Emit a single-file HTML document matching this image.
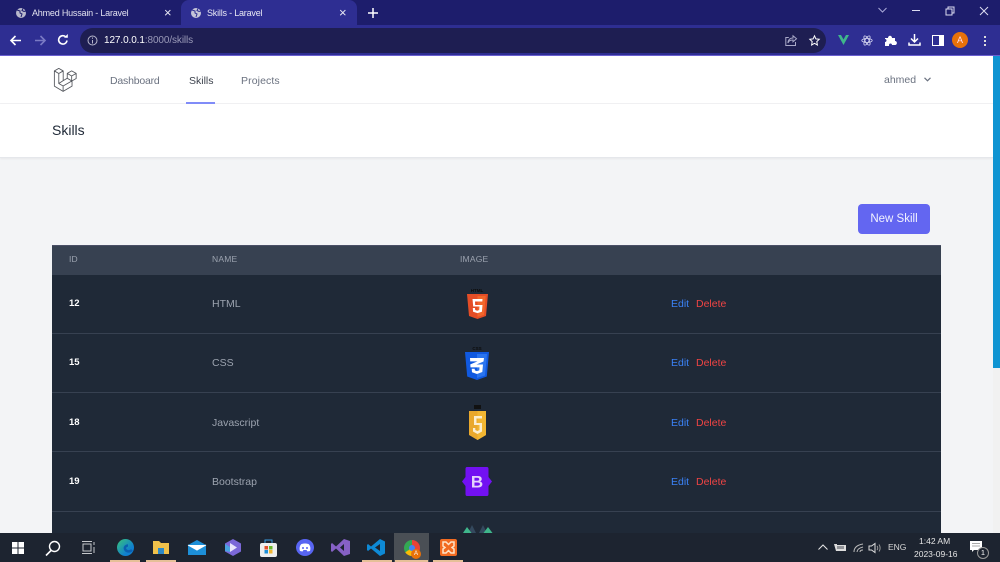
<!DOCTYPE html>
<html><head><meta charset="utf-8">
<style>
html,body{margin:0;padding:0;width:1000px;height:562px;overflow:hidden;background:#f3f4f6;font-family:"Liberation Sans",sans-serif}
#w{position:absolute;left:0;top:0;width:1000px;height:562px;overflow:hidden;filter:blur(.35px)}
.a{position:absolute;white-space:nowrap}
svg{position:absolute;overflow:visible}
.row{position:absolute;left:52px;width:889px;height:59px;background:#1f2937;border-top:1px solid #374151;box-sizing:border-box}
.t{position:absolute;font-size:10.5px;line-height:14px;white-space:nowrap}
</style></head><body><div id="w">
<!-- chrome -->
<div class="a" style="left:0;top:0;width:1000px;height:26px;background:#1d1d6c"></div>
<div class="a" style="left:181px;top:0;width:176px;height:26px;background:#2e2e92;border-radius:8px 8px 0 0"></div>
<div class="a" style="left:0;top:25px;width:1000px;height:31px;background:#2e2e92"></div>
<div class="a" style="left:0;top:55px;width:1000px;height:1px;background:#6a5fd0"></div>
<div class="a" style="left:80px;top:28px;width:746px;height:25px;background:#1e1e52;border-radius:13px"></div>
<svg style="left:15px;top:7px" width="12" height="12" viewBox="0 0 12 12"><circle cx="6" cy="6" r="5" fill="#b8b8cc"/><path d="M2 3l3 1 0 2 2 1-1 3M8 1.500l-1 2 2 1 2-.5" stroke="#1d1d6c" fill="none"/></svg>
<div class="a" style="left:32px;top:6px;font-size:9px;letter-spacing:-.2px;line-height:14px;color:#e2e2f0">Ahmed Hussain - Laravel</div>
<div class="a" style="left:164px;top:5px;font-size:13px;line-height:15px;color:#e8e8f4">×</div>
<svg style="left:190px;top:7px" width="12" height="12" viewBox="0 0 12 12"><circle cx="6" cy="6" r="5" fill="#c4c4d8"/><path d="M2 3l3 1 0 2 2 1-1 3M8 1.500l-1 2 2 1 2-.5" stroke="#2e2e92" fill="none"/></svg>
<div class="a" style="left:207px;top:6px;font-size:9px;letter-spacing:-.2px;line-height:14px;color:#e8e8f4">Skills - Laravel</div>
<div class="a" style="left:339px;top:5px;font-size:13px;line-height:15px;color:#e8e8f4">×</div>
<svg style="left:368px;top:8px" width="10" height="10"><path d="M5 0v10M0 5h10" stroke="#fff" stroke-width="1.500"/></svg>
<svg style="left:878px;top:7px" width="9" height="6"><path d="M.5 1l4 4 4-4" stroke="#a9a9d8" fill="none"/></svg>
<svg style="left:912px;top:10px" width="10" height="2"><path d="M0 .5h8" stroke="#dcdcf0"/></svg>
<svg style="left:945px;top:6px" width="10" height="10"><path d="M1 3h6v6h-6zM3 3v-2h6v6h-2" stroke="#dcdcf0" fill="none"/></svg>
<svg style="left:979px;top:6px" width="10" height="10"><path d="M1 1l8 8M9 1l-8 8" stroke="#dcdcf0"/></svg>
<svg style="left:10px;top:35px" width="12" height="11"><path d="M11 5.500H1.500M5.500 1L1 5.500 5.500 10" stroke="#fff" stroke-width="1.600" fill="none"/></svg>
<svg style="left:34px;top:35px" width="12" height="11"><path d="M1 5.500h9.500M6.500 1L11 5.500 6.500 10" stroke="#7a7ac4" stroke-width="1.600" fill="none"/></svg>
<svg style="left:57px;top:34px" width="12" height="12"><path d="M10 6.500A4.200 4.200 0 1 1 8.900 3" stroke="#fff" stroke-width="1.600" fill="none"/><path d="M7 3.800h3.800V0z" fill="#fff"/></svg>
<svg style="left:87px;top:35px" width="11" height="11"><circle cx="5.500" cy="5.500" r="4.500" stroke="#b8b8cc" fill="none"/><path d="M5.500 5v3.500M5.500 2.500v1.200" stroke="#b8b8cc"/></svg>
<div class="a" style="left:104px;top:33px;font-size:10px;letter-spacing:-.1px;line-height:15px;color:#fff">127.0.0.1<span style="color:#9a9ab8">:8000/skills</span></div>
<svg style="left:785px;top:35px" width="12" height="11"><path d="M8 .8l3.500 3-3.500 3V5C5 5 3.500 6 3 8c0-3 2-5 5-5zM10.500 7v3.500H.8V2.500h3" stroke="#a9a9c8" fill="none"/></svg>
<svg style="left:809px;top:35px" width="11" height="11" viewBox="0 0 11 11"><path d="M5.500.8l1.400 3.100 3.300.4-2.400 2.300.6 3.400-2.900-1.700L2.600 10l.6-3.400L.8 4.300l3.300-.4z" stroke="#fff" fill="none"/></svg>
<svg style="left:838px;top:35px" width="11" height="10"><path d="M0 0h3l2.500 4.500L8 0h3L5.500 10z" fill="#3fb68b"/></svg>
<svg style="left:861px;top:35px" width="12" height="11" viewBox="0 0 12 11"><ellipse cx="6" cy="5.500" rx="5.200" ry="2" stroke="#d5d5f0" fill="none" stroke-width=".8"/><ellipse cx="6" cy="5.500" rx="5.200" ry="2" stroke="#d5d5f0" fill="none" stroke-width=".8" transform="rotate(60 6 5.500)"/><ellipse cx="6" cy="5.500" rx="5.200" ry="2" stroke="#d5d5f0" fill="none" stroke-width=".8" transform="rotate(120 6 5.500)"/></svg>
<svg style="left:885px;top:35px" width="11" height="11"><path d="M0 3h3c0-3 4-3 4 0h3v3c2.500 0 2.500 4 0 4H7c0-2-3-2-3 0v1H0V7c2 0 2-3 0-3z" fill="#fff"/></svg>
<svg style="left:908px;top:34px" width="13" height="12"><path d="M6.500 0v7M3 4.500l3.500 3.500L10 4.500" stroke="#fff" stroke-width="1.500" fill="none"/><path d="M1 8.500v2.500h11V8.500" stroke="#fff" stroke-width="1.500" fill="none"/></svg>
<div class="a" style="left:932px;top:35px;width:10px;height:9px;border:1px solid #fff;box-sizing:content-box;background:linear-gradient(90deg,#2e2e92 60%,#fff 60%)"></div>
<div class="a" style="left:952px;top:32px;width:16px;height:16px;border-radius:50%;background:#e8710a;color:#fde;font-size:9px;line-height:16px;text-align:center">A</div>
<div class="a" style="left:984px;top:36px;width:2px;height:2px;background:#ddd;box-shadow:0 4px #ddd,0 8px #ddd"></div>

<!-- nav -->
<div class="a" style="left:0;top:56px;width:993px;height:47px;background:#fff"></div>
<div class="a" style="left:0;top:103px;width:993px;height:1px;background:#f0f1f3"></div>
<svg style="left:54px;top:68px" width="23" height="24" viewBox="0 0 50 52"><path d="M.8 6.300L10.400.8 20 6.300V27.300l8.800-5.100V11.700l9.600-5.500 9.800 5.500V22.700L39.200 28V39.200L19.800 50.800.8 39.200zM.8 6.300l9.600 5.500L20 6.300M10.400 11.800V33.500L19.800 39v11.800M20 27.300l-9.600 6.200M19.800 39l19.400-11M28.800 11.700l9.600 5.500 9.800-5.500M38.400 17.200V28M28.800 22.200L38.400 28" fill="none" stroke="#55585e" stroke-width="1.900" stroke-linejoin="round"/></svg>
<div class="a" style="left:110px;top:74px;font-size:10.5px;letter-spacing:-.2px;line-height:14px;color:#6b7280">Dashboard</div>
<div class="a" style="left:189px;top:74px;font-size:10.5px;line-height:14px;color:#3d434e">Skills</div>
<div class="a" style="left:186px;top:102px;width:29px;height:2px;background:#818cf8"></div>
<div class="a" style="left:241px;top:74px;font-size:10.5px;line-height:14px;color:#6b7280;letter-spacing:.1px">Projects</div>
<div class="a" style="left:884px;top:73px;font-size:10.5px;line-height:14px;color:#6b7280">ahmed</div>
<svg style="left:924px;top:77px" width="7" height="5"><path d="M.5 .8l3 3 3-3" stroke="#6b7280" stroke-width="1.200" fill="none"/></svg>

<!-- header -->
<div class="a" style="left:0;top:104px;width:993px;height:53px;background:#fff;border-bottom:1px solid #e5e7eb;box-shadow:0 1px 2px rgba(0,0,0,.05)"></div>
<div class="a" style="left:52px;top:122px;font-size:14px;line-height:17px;color:#1f2937">Skills</div>

<!-- scrollbar -->
<div class="a" style="left:993px;top:56px;width:7px;height:312px;background:#0f94d2"></div>
<div class="a" style="left:993px;top:368px;width:7px;height:170px;background:#f1f1f1"></div>

<!-- button -->
<div class="a" style="left:858px;top:204px;width:72px;height:30px;background:#6366f1;border-radius:4px;color:#f2f2ff;font-size:11.5px;line-height:30px;text-align:center">New Skill</div>

<!-- table -->
<div class="a" style="left:52px;top:245px;width:889px;height:30px;background:#374151;border-top:1px solid #4a4f66;box-sizing:border-box"></div>
<div class="t" style="left:69px;top:252px;font-size:8.5px;color:#9ca3af;letter-spacing:.2px">ID</div>
<div class="t" style="left:212px;top:252px;font-size:8.5px;color:#9ca3af;letter-spacing:.2px">NAME</div>
<div class="t" style="left:460px;top:252px;font-size:8.5px;color:#9ca3af;letter-spacing:.2px">IMAGE</div>
<div class="a" style="left:52px;top:275px;width:889px;height:258px;background:#1f2937"></div>
<div class="row" style="top:333px;height:1px"></div>
<div class="row" style="top:392px;height:1px"></div>
<div class="row" style="top:451px;height:1px"></div>
<div class="row" style="top:511px;height:1px"></div>

<div class="t" style="left:69px;top:297px;color:#fff;font-weight:bold;font-size:9.5px">12</div>
<div class="t" style="left:212px;top:297px;color:#9ca3af">HTML</div>
<div class="t" style="left:671px;top:297px;color:#3b82f6">Edit</div>
<div class="t" style="left:696px;top:297px;color:#ef4444">Delete</div>

<div class="t" style="left:69px;top:356px;color:#fff;font-weight:bold;font-size:9.5px">15</div>
<div class="t" style="left:212px;top:356px;color:#9ca3af">CSS</div>
<div class="t" style="left:671px;top:356px;color:#3b82f6">Edit</div>
<div class="t" style="left:696px;top:356px;color:#ef4444">Delete</div>

<div class="t" style="left:69px;top:416px;color:#fff;font-weight:bold;font-size:9.5px">18</div>
<div class="t" style="left:212px;top:416px;color:#9ca3af">Javascript</div>
<div class="t" style="left:671px;top:416px;color:#3b82f6">Edit</div>
<div class="t" style="left:696px;top:416px;color:#ef4444">Delete</div>

<div class="t" style="left:69px;top:475px;color:#fff;font-weight:bold;font-size:9.5px">19</div>
<div class="t" style="left:212px;top:475px;color:#9ca3af">Bootstrap</div>
<div class="t" style="left:671px;top:475px;color:#3b82f6">Edit</div>
<div class="t" style="left:696px;top:475px;color:#ef4444">Delete</div>

<!-- logos -->
<div class="a" style="left:466px;top:288px;width:22px;font-size:4.5px;line-height:5px;text-align:center;color:#0c0c0c;font-weight:bold">HTML</div>
<svg style="left:467px;top:294px" width="21" height="25" viewBox="0 0 21 25"><path d="M0 0h21l-2 22-8.500 3L2 22z" fill="#e44d26"/><path d="M10.500 2v21l6.500-2 1.700-19z" fill="#f1662a"/><path d="M15.500 5H5.500l.7 7.500h6.300l-.3 3.500-2 .7-2-.7-.2-2H5.800l.3 3.800 4.400 1.300 4.400-1.300.6-6.800H8.200L8 7.500h7.300z" fill="#fff"/></svg>

<div class="a" style="left:466px;top:346px;width:22px;font-size:4.5px;line-height:5px;text-align:center;color:#0c0c0c;font-weight:bold">CSS</div>
<svg style="left:465px;top:352px" width="24" height="28" viewBox="0 0 24 28"><path d="M0 0h24l-2.200 24.500L12 28 2.200 24.500z" fill="#1059e0"/><path d="M12 2v24l8-2.500L22 2z" fill="#2a74ee"/><path d="M5 6h14l-.5 3.500-7 3h6.500l-.7 7.500L12 22l-5-1.800-.3-3.500h3l.2 1.700 2.100.7 2.300-.7.200-3H5.500l-.2-3 7.200-3H5.200z" fill="#fff"/></svg>

<div class="a" style="left:474px;top:405px;width:7px;height:4px;background:#111"></div>
<svg style="left:469px;top:411px" width="17" height="29" viewBox="0 0 17 29"><path d="M0 0h17v24l-8.500 5L0 24z" fill="#e9a82c"/><path d="M8.500 0h8.500v24l-8.500 5z" fill="#f2b632"/><path d="M13 5H5v9h5.500v5l-2 1-2.200-1v-2H4v3.500L8.500 23l4.500-2.500V12H7.500V7.500H13z" fill="#fbeecf"/></svg>

<svg style="left:462px;top:467px" width="30" height="29" viewBox="0 0 30 29"><path d="M5 0h20q1.500 0 1.500 2v8l3.500 4.500L26.500 19v8q0 2-1.500 2H5q-1.500 0-1.500-2V19L0 14.500 3.500 10V2Q3.500 0 5 0z" fill="#7211f2"/><text x="15" y="20.500" font-family="Liberation Sans,sans-serif" font-size="17" font-weight="bold" fill="#e4d4fb" text-anchor="middle">B</text></svg>

<svg style="left:462px;top:524px" width="32" height="9" viewBox="0 0 32 9"><path d="M6 9l4-8 4 8z" fill="#34495e"/><path d="M17 9l4-8 4 8z" fill="#34495e"/><path d="M1 9l4-6 4.500 6z" fill="#3fb68b"/><path d="M21.500 9l4.500-6 4.500 6z" fill="#3fb68b"/></svg>

<!-- taskbar -->
<div class="a" style="left:0;top:533px;width:1000px;height:29px;background:#1d2430"></div>
<div class="a" style="left:394px;top:533px;width:35px;height:29px;background:#4a4f55"></div>
<div class="a" style="left:110px;top:560px;width:30px;height:2px;background:#e6c098"></div>
<div class="a" style="left:146px;top:560px;width:30px;height:2px;background:#e6c098"></div>
<div class="a" style="left:362px;top:560px;width:30px;height:2px;background:#e6c098"></div>
<div class="a" style="left:395px;top:560px;width:33px;height:2px;background:#e6c098"></div>
<div class="a" style="left:433px;top:560px;width:30px;height:2px;background:#e6c098"></div>
<svg style="left:12px;top:542px" width="12" height="12"><path d="M0 0h5.500v5.500H0zM6.500 0H12v5.500H6.500zM0 6.500h5.500V12H0zM6.500 6.500H12V12H6.500z" fill="#fff"/></svg>
<svg style="left:45px;top:540px" width="16" height="16"><circle cx="9.500" cy="6.500" r="5" stroke="#fff" stroke-width="1.400" fill="none"/><path d="M6 10.500L1 15.500" stroke="#fff" stroke-width="1.600"/></svg>
<svg style="left:82px;top:541px" width="13" height="13"><path d="M1 3h8v7H1zM0 .5h10M0 12.500h10M12 1v3M12 6v6" stroke="#c5c8cc" fill="none"/></svg>
<div class="a" style="left:117px;top:539px;width:17px;height:17px;border-radius:50%;background:linear-gradient(135deg,#39c37a,#0f7fd0 70%)"></div>
<svg style="left:117px;top:539px" width="17" height="17"><path d="M15 11c-2 2-6 2-7-1-.5-2 1-3.500 3-3.500" stroke="#0b5fb0" stroke-width="2.500" fill="none"/></svg>
<svg style="left:153px;top:541px" width="16" height="13"><path d="M0 0h6l2 2h8v11H0z" fill="#f0c14b"/><path d="M5 7h6v6H5z" fill="#2d89c8"/></svg>
<svg style="left:188px;top:540px" width="18" height="15"><path d="M0 5L9 0l9 5v10H0z" fill="#1d8fd8"/><path d="M0 5l9 5 9-5" fill="#fff" stroke="#fff"/></svg>
<svg style="left:225px;top:539px" width="16" height="17"><path d="M8 0l8 4.500v8L8 17 0 12.500v-8z" fill="#7b68d8"/><path d="M5 4l7 4.500L5 13z" fill="#e9e6fb"/><path d="M0 5l5 3v5l-5-1z" fill="#4aa3e0"/></svg>
<svg style="left:260px;top:539px" width="17" height="18"><rect y="4" width="17" height="14" rx="2" fill="#eee"/><path d="M5 4V1h7v3" stroke="#3a9be0" fill="none"/><rect x="4.500" y="7" width="3.500" height="3.500" fill="#e2502a"/><rect x="9" y="7" width="3.500" height="3.500" fill="#6ab82a"/><rect x="4.500" y="11" width="3.500" height="3.500" fill="#1d8fd8"/><rect x="9" y="11" width="3.500" height="3.500" fill="#f2b632"/></svg>
<div class="a" style="left:296px;top:539px;width:18px;height:17px;border-radius:50%;background:#5865f2"></div>
<svg style="left:299px;top:543px" width="12" height="9"><path d="M1 8C0 5 1 2 2.500 1L5 .5h2L9.500 1C11 2 12 5 11 8L8.500 8.500 7.500 7h-3L3.500 8.500z" fill="#fff"/><circle cx="4" cy="5" r="1" fill="#5865f2"/><circle cx="8" cy="5" r="1" fill="#5865f2"/></svg>
<svg style="left:331px;top:539px" width="19" height="17"><path d="M13 0l6 2v13l-6 2-8-7.500L1 13l-1-1V5l1-1 4 3.500zM13 5L9 8.500l4 3.500z" fill="#8661c5"/></svg>
<svg style="left:367px;top:539px" width="18" height="17"><path d="M13 0l5 2.500v12L13 17 4 9.500 1 12l-1-1V6l1-1 3 2.500zM13 5L8 8.500l5 3.500z" fill="#0e8ad6"/></svg>
<div class="a" style="left:404px;top:540px;width:16px;height:16px;border-radius:50%;background:conic-gradient(#ea4335 0 33%,#fbbc05 33% 66%,#34a853 66%);"></div>
<div class="a" style="left:409px;top:545px;width:6px;height:6px;border-radius:50%;background:#4285f4"></div>
<div class="a" style="left:411px;top:549px;width:10px;height:10px;border-radius:50%;background:#e8710a;color:#fff;font-size:6px;line-height:10px;text-align:center">A</div>
<div class="a" style="left:440px;top:539px;width:17px;height:17px;border-radius:2px;background:#f26b21"></div>
<svg style="left:442px;top:541px" width="13" height="13"><path d="M1 1h3l2.500 2.500L9 1h3v4l-2 1.500L12 8v4H9L6.500 9.500 4 12H1V8l2-1.500L1 5z" fill="none" stroke="#fde3c8" stroke-width="1.500"/></svg>

<svg style="left:818px;top:544px" width="10" height="6"><path d="M.5 5.500L5 1l4.500 4.500" stroke="#e6e6e6" fill="none"/></svg>
<svg style="left:834px;top:543px" width="12" height="9"><path d="M0 1h3v1h9v6H2z" fill="#ddd"/><path d="M3 3h7v3H3z" fill="#1d2430" opacity=".4"/></svg>
<svg style="left:853px;top:543px" width="11" height="10"><path d="M1 9c0-4 3-7 9-8M4 9c0-2 2-4 6-5M7 9c0-1 1-2 3-2" stroke="#bbb" fill="none"/></svg>
<svg style="left:869px;top:543px" width="12" height="10"><path d="M0 3h2.500L6 .5v9L2.500 7H0z" fill="none" stroke="#ddd"/><path d="M8 3c1 1 1 3 0 4M10 1.500c1.500 2 1.500 5 0 7" stroke="#999" fill="none"/></svg>
<div class="a" style="left:888px;top:542px;font-size:8.5px;line-height:11px;color:#d8d8d8">ENG</div>
<div class="a" style="left:919px;top:535px;font-size:8.5px;line-height:12px;color:#e4e4e4">1:42 AM</div>
<div class="a" style="left:914px;top:548px;font-size:8.5px;line-height:12px;color:#e4e4e4">2023-09-16</div>
<svg style="left:970px;top:541px" width="14" height="13"><path d="M0 0h12v9H4L2 11V9H0z" fill="#fff"/><path d="M2 2.500h8M2 5h8" stroke="#555" stroke-width=".6"/></svg>
<div class="a" style="left:977px;top:547px;width:10px;height:10px;border:1px solid #999;border-radius:50%;background:#1d2430;color:#fff;font-size:7.5px;line-height:10px;text-align:center">1</div>
</div></body></html>
